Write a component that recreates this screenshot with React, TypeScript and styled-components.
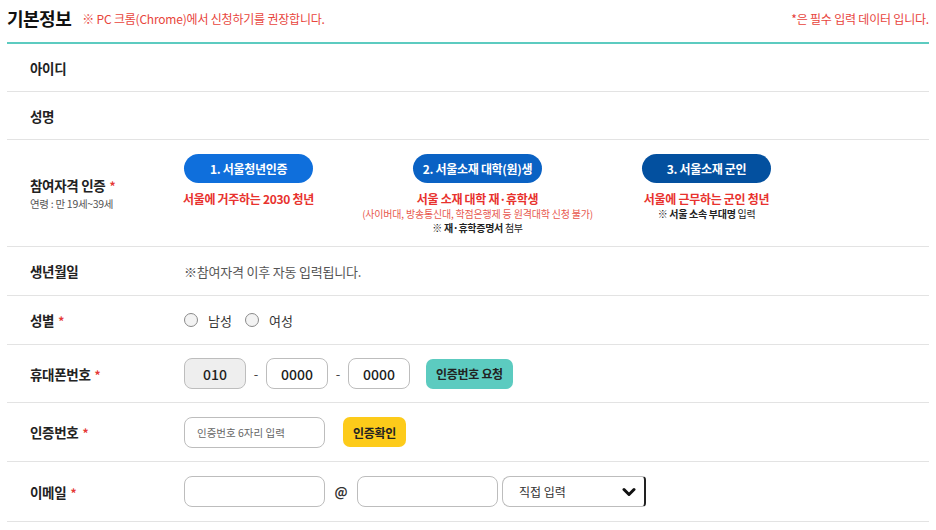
import React from "react";
import styled, { createGlobalStyle } from "styled-components";

const Global = createGlobalStyle`
  html, body { margin: 0; padding: 0; background: #fff; }
  body { font-family: "Noto Sans CJK KR", "Noto Sans", sans-serif; color: #222; }
  * { box-sizing: border-box; }
`;

const Page = styled.div`
  width: 936px;
  padding: 0 7px;
`;

const Header = styled.div`
  display: flex;
  align-items: center;
  height: 44px;
  border-bottom: 2px solid #5ccbc0;
  padding-bottom: 6px;
`;

const Title = styled.h2`
  margin: 0;
  font-size: 18px;
  font-weight: 700;
  color: #111;
  letter-spacing: -0.5px;
`;

const Notice = styled.span`
  margin-left: 11px;
  font-size: 12px;
  color: #e8453c;
  letter-spacing: -0.2px;
`;

const RightNote = styled.span`
  margin-left: auto;
  font-size: 12px;
  color: #e8453c;
  letter-spacing: -0.2px;
`;

const Row = styled.div<{ $h: number }>`
  display: grid;
  grid-template-columns: 177px 1fr;
  align-items: center;
  height: ${(p) => p.$h}px;
  border-bottom: 1px solid #e3e3e3;
`;

const Label = styled.div`
  padding-left: 23px;
  font-size: 13.5px;
  font-weight: 700;
  color: #222;
  letter-spacing: -0.3px;
  display: flex;
  flex-direction: column;
`;

const Star = styled.span`
  color: #e53935;
  margin-left: 4px;
  font-size: 12px;
`;

const SubLabel = styled.span`
  font-size: 10.5px;
  font-weight: 400;
  color: #555;
  margin-top: 1px;
`;

const Content = styled.div`
  display: flex;
  align-items: center;
`;

const QualGrid = styled.div`
  display: flex;
  gap: 100px;
  align-self: start;
  padding-top: 14px;
`;

const QualCol = styled.div`
  width: 129px;
  display: flex;
  flex-direction: column;
  align-items: center;
`;

const Pill = styled.button<{ $bg: string }>`
  width: 129px;
  height: 29px;
  border: none;
  border-radius: 15px;
  background: ${(p) => p.$bg};
  color: #fff;
  font-family: inherit;
  font-size: 12px;
  font-weight: 700;
  letter-spacing: -0.3px;
  margin-bottom: 7px;
`;

const RedBold = styled.div`
  white-space: nowrap;
  color: #e8322e;
  font-size: 12px;
  font-weight: 700;
  line-height: 17px;
  letter-spacing: -0.3px;
`;

const RedSmall = styled.div`
  white-space: nowrap;
  color: #e8584e;
  font-size: 10px;
  line-height: 14px;
  letter-spacing: -0.2px;
`;

const Note = styled.div`
  white-space: nowrap;
  color: #222;
  font-size: 10px;
  line-height: 14px;
  letter-spacing: -0.3px;
  b { font-weight: 700; }
`;

const Muted = styled.span`
  font-size: 13px;
  color: #555;
  letter-spacing: -0.2px;
`;

const RadioItem = styled.label`
  display: flex;
  align-items: center;
  font-size: 13px;
  color: #333;
  margin-right: 13px;
`;

const RadioCircle = styled.span`
  width: 14px;
  height: 14px;
  border: 1px solid #8a8a8a;
  border-radius: 50%;
  background: #f3f3f3;
  margin-right: 10px;
`;

const Box = styled.div<{ $w: number; $gray?: boolean }>`
  width: ${(p) => p.$w}px;
  height: 31px;
  border: 1px solid #bdbdbd;
  border-radius: 8px;
  background: ${(p) => (p.$gray ? "#eeeeee" : "#fff")};
  display: flex;
  align-items: center;
  justify-content: center;
  font-size: 14px;
  font-weight: 500;
  color: #222;
`;

const Placeholder = styled(Box)`
  justify-content: flex-start;
  padding-left: 12px;
  font-size: 10.5px;
  font-weight: 400;
  color: #666;
`;

const Dash = styled.span<{ $w: number }>`
  width: ${(p) => p.$w}px;
  text-align: center;
  font-size: 13px;
  color: #444;
`;

const ActionBtn = styled.button<{ $bg: string; $ml: number }>`
  height: 30px;
  margin-left: ${(p) => p.$ml}px;
  padding: 0 10px;
  border: none;
  border-radius: 7px;
  background: ${(p) => p.$bg};
  color: #222;
  font-family: inherit;
  font-size: 12px;
  font-weight: 700;
  letter-spacing: -0.3px;
`;

const At = styled.span`
  width: 32px;
  text-align: center;
  font-size: 13px;
  font-weight: 700;
  color: #333;
`;

const Select = styled.div`
  width: 144px;
  height: 31px;
  margin-left: 4px;
  border: 1px solid #bdbdbd;
  border-right: 2px solid #222;
  border-radius: 8px 4px 4px 8px;
  display: flex;
  align-items: center;
  justify-content: space-between;
  padding: 0 8px 0 16px;
  font-size: 12px;
  color: #333;
`;

export default function App() {
  return (
    <Page>
      <Global />
      <Header>
        <Title>기본정보</Title>
        <Notice>※ PC 크롬(Chrome)에서 신청하기를 권장합니다.</Notice>
        <RightNote>
          <span style={{ color: "#e53935" }}>*</span>은 필수 입력 데이터 입니다.
        </RightNote>
      </Header>

      <Row $h={48}>
        <Label>아이디</Label>
        <Content />
      </Row>
      <Row $h={48}>
        <Label>성명</Label>
        <Content />
      </Row>
      <Row $h={107}>
        <Label>
          <span>
            참여자격 인증<Star>*</Star>
          </span>
          <SubLabel>연령 : 만 19세~39세</SubLabel>
        </Label>
        <QualGrid>
          <QualCol>
            <Pill $bg="#0f6fdc">1. 서울청년인증</Pill>
            <RedBold>서울에 거주하는 2030 청년</RedBold>
          </QualCol>
          <QualCol>
            <Pill $bg="#0a62c4">2. 서울소재 대학(원)생</Pill>
            <RedBold>서울 소재 대학 재·휴학생</RedBold>
            <RedSmall>(사이버대, 방송통신대, 학점은행제 등 원격대학 신청 불가)</RedSmall>
            <Note>
              <b>※ 재·휴학증명서</b> 첨부
            </Note>
          </QualCol>
          <QualCol>
            <Pill $bg="#03509f">3. 서울소재 군인</Pill>
            <RedBold>서울에 근무하는 군인 청년</RedBold>
            <Note>
              <b>※ 서울 소속 부대명</b> 입력
            </Note>
          </QualCol>
        </QualGrid>
      </Row>
      <Row $h={49}>
        <Label>생년월일</Label>
        <Content>
          <Muted>※참여자격 이후 자동 입력됩니다.</Muted>
        </Content>
      </Row>
      <Row $h={49}>
        <Label>
          <span>
            성별<Star>*</Star>
          </span>
        </Label>
        <Content>
          <RadioItem>
            <RadioCircle />
            남성
          </RadioItem>
          <RadioItem>
            <RadioCircle />
            여성
          </RadioItem>
        </Content>
      </Row>
      <Row $h={58}>
        <Label>
          <span>
            휴대폰번호<Star>*</Star>
          </span>
        </Label>
        <Content>
          <Box $w={62} $gray>
            010
          </Box>
          <Dash $w={20}>-</Dash>
          <Box $w={62}>0000</Box>
          <Dash $w={20}>-</Dash>
          <Box $w={62}>0000</Box>
          <ActionBtn $bg="#5ccbc0" $ml={16}>
            인증번호 요청
          </ActionBtn>
        </Content>
      </Row>
      <Row $h={59}>
        <Label>
          <span>
            인증번호<Star>*</Star>
          </span>
        </Label>
        <Content>
          <Placeholder $w={141}>인증번호 6자리 입력</Placeholder>
          <ActionBtn $bg="#fdcb1a" $ml={18}>
            인증확인
          </ActionBtn>
        </Content>
      </Row>
      <Row $h={60}>
        <Label>
          <span>
            이메일<Star>*</Star>
          </span>
        </Label>
        <Content>
          <Box $w={141} />
          <At>@</At>
          <Box $w={141} />
          <Select>
            직접 입력
            <svg width="14" height="10" viewBox="0 0 14 10">
              <path d="M2 2.5 L7 7.5 L12 2.5" fill="none" stroke="#111" strokeWidth="3" strokeLinecap="round" strokeLinejoin="round" />
            </svg>
          </Select>
        </Content>
      </Row>
    </Page>
  );
}
